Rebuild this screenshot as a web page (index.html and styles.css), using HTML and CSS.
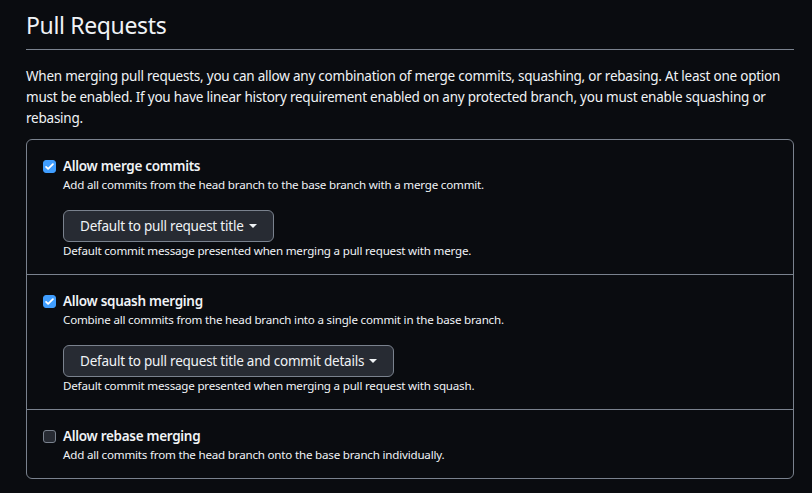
FILE: index.html
```html
<!DOCTYPE html>
<html lang="en">
<head>
<meta charset="utf-8">
<title>Pull Requests</title>
<link rel="stylesheet" href="styles.css">
</head>
<body>
<div class="page">
  <h2 class="subhead">Pull Requests</h2>
  <p class="intro">When merging pull requests, you can allow any combination of merge commits, squashing, or rebasing. At least one option must be enabled. If you have linear history requirement enabled on any protected branch, you must enable squashing or rebasing.</p>
  <div class="box">
    <div class="row">
      <div class="check">
        <span class="cb cb-on"><svg viewBox="0 0 16 16" width="11" height="11"><path d="M3 8.5l3 3 7-7" fill="none" stroke="#fff" stroke-width="2.6" stroke-linecap="round" stroke-linejoin="round"/></svg></span>
        <div class="check-body">
          <div class="label">Allow merge commits</div>
          <div class="note">Add all commits from the head branch to the base branch with a merge commit.</div>
          <div class="btn">Default to pull request title<span class="caret"></span></div>
          <div class="note">Default commit message presented when merging a pull request with merge.</div>
        </div>
      </div>
    </div>
    <div class="row">
      <div class="check">
        <span class="cb cb-on"><svg viewBox="0 0 16 16" width="11" height="11"><path d="M3 8.5l3 3 7-7" fill="none" stroke="#fff" stroke-width="2.6" stroke-linecap="round" stroke-linejoin="round"/></svg></span>
        <div class="check-body">
          <div class="label">Allow squash merging</div>
          <div class="note">Combine all commits from the head branch into a single commit in the base branch.</div>
          <div class="btn">Default to pull request title and commit details<span class="caret"></span></div>
          <div class="note">Default commit message presented when merging a pull request with squash.</div>
        </div>
      </div>
    </div>
    <div class="row">
      <div class="check">
        <span class="cb"></span>
        <div class="check-body">
          <div class="label">Allow rebase merging</div>
          <div class="note">Add all commits from the head branch onto the base branch individually.</div>
        </div>
      </div>
    </div>
  </div>
</div>
</body>
</html>
```

FILE: styles.css
```css
* { box-sizing: border-box; }
html, body { margin: 0; background: #0a0c10; }
body {
  font-family: "Noto Sans", "Open Sans", sans-serif;
  color: #f0f3f6;
  font-size: 13.5px;
  letter-spacing: -0.15px;
}
.page { padding: 0 18px 0 26px; }
.subhead {
  margin: 0;
  padding: 8px 0 7px;
  font-size: 23px;
  font-weight: 400;
  letter-spacing: -0.35px;
  line-height: 34px;
  border-bottom: 1px solid #7a828e;
}
.intro {
  margin: 16px 0 10px;
  line-height: 21px;
  letter-spacing: -0.23px;
}
.box {
  border: 1px solid #7a828e;
  border-radius: 6px;
}
.row {
  padding: 16px 16px 14px;
  border-top: 1px solid #7a828e;
}
.row:first-child { border-top: 0; }
.check { display: flex; align-items: flex-start; }
.cb {
  flex: none;
  width: 13px;
  height: 13px;
  margin-top: 4px;
  margin-right: 7px;
  border-radius: 3px;
  border: 1px solid #7a828e;
  background: #272b33;
  display: flex;
  align-items: center;
  justify-content: center;
}
.cb-on { background: #409eff; border-color: #409eff; }
.label { font-weight: 600; line-height: 20px; letter-spacing: -0.3px; }
.note { font-size: 11.6px; letter-spacing: -0.2px; line-height: 18px; }
.btn {
  display: inline-flex;
  align-items: center;
  height: 32px;
  margin-top: 16px;
  padding: 0 16px;
  border: 1px solid #7a828e;
  border-radius: 6px;
  background: #272b33;
  letter-spacing: -0.22px;
}
.caret {
  display: inline-block;
  margin-left: 5px;
  border-top: 4px solid #f0f3f6;
  border-left: 4px solid transparent;
  border-right: 4px solid transparent;
}
```
